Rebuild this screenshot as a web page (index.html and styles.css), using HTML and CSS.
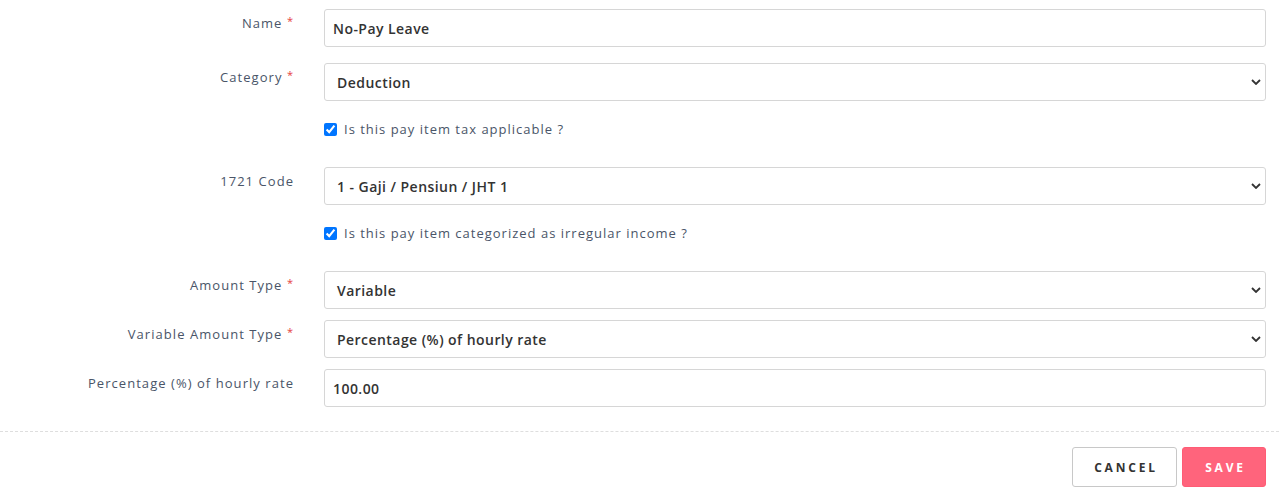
FILE: index.html
```html
<!DOCTYPE html>
<html>
<head>
<meta charset="utf-8">
<link rel="stylesheet" href="styles.css">
</head>
<body>
<form class="form">
  <div class="fields">
    <div class="row">
      <label class="label">Name <span class="req">*</span></label>
      <div class="control"><input class="input" type="text" value="No-Pay Leave"></div>
    </div>
    <div class="row">
      <label class="label">Category <span class="req">*</span></label>
      <div class="control select-wrap">
        <div class="select">Deduction</div>
        <svg class="chev" width="10" height="6" viewBox="0 0 10 6"><path d="M1 1l4 4 4-4" fill="none" stroke="#333" stroke-width="1.8"/></svg>
      </div>
    </div>
    <div class="check-row">
      <label class="check"><input type="checkbox" checked> <span>Is this pay item tax applicable ?</span></label>
    </div>
    <div class="row">
      <label class="label">1721 Code</label>
      <div class="control select-wrap">
        <div class="select">1 - Gaji / Pensiun / JHT 1</div>
        <svg class="chev" width="10" height="6" viewBox="0 0 10 6"><path d="M1 1l4 4 4-4" fill="none" stroke="#333" stroke-width="1.8"/></svg>
      </div>
    </div>
    <div class="check-row">
      <label class="check"><input type="checkbox" checked> <span>Is this pay item categorized as irregular income ?</span></label>
    </div>
    <div class="row tight">
      <label class="label">Amount Type <span class="req">*</span></label>
      <div class="control select-wrap">
        <div class="select">Variable</div>
        <svg class="chev" width="10" height="6" viewBox="0 0 10 6"><path d="M1 1l4 4 4-4" fill="none" stroke="#333" stroke-width="1.8"/></svg>
      </div>
    </div>
    <div class="row tight">
      <label class="label">Variable Amount Type <span class="req">*</span></label>
      <div class="control select-wrap">
        <div class="select">Percentage (%) of hourly rate</div>
        <svg class="chev" width="10" height="6" viewBox="0 0 10 6"><path d="M1 1l4 4 4-4" fill="none" stroke="#333" stroke-width="1.8"/></svg>
      </div>
    </div>
    <div class="row tight">
      <label class="label">Percentage (%) of hourly rate</label>
      <div class="control"><input class="input" type="text" value="100.00"></div>
    </div>
  </div>
  <div class="footer">
    <button type="button" class="btn btn-cancel">CANCEL</button>
    <button type="button" class="btn btn-save">SAVE</button>
  </div>
</form>
</body>
</html>
```
FILE: styles.css
```css
html, body {
  margin: 0;
  padding: 0;
  background: #fff;
}
body {
  font-family: "Open Sans", "Noto Sans", sans-serif;
  color: #333;
}
.form {
  display: flex;
  flex-direction: column;
}
.fields {
  padding: 9px 13px 0 0;
  display: flex;
  flex-direction: column;
}
.row {
  display: flex;
  align-items: flex-start;
  gap: 30px;
  margin-bottom: 16px;
}
.row.tight {
  margin-bottom: 11px;
}
.label {
  width: 294px;
  flex: none;
  text-align: right;
  font-size: 13px;
  line-height: 20px;
  padding-top: 4px;
  color: #4a5568;
  letter-spacing: 1.05px;
}
.req {
  color: #e53e3e;
  font-size: 11px;
  vertical-align: top;
  position: relative;
  top: -2px;
}
.control {
  flex: 1;
  position: relative;
}
.input, .select {
  box-sizing: border-box;
  width: 100%;
  height: 38px;
  border: 1px solid #d6d6d6;
  border-radius: 3px;
  background: #fff;
  font-family: "Open Sans", "Noto Sans", sans-serif;
  font-size: 14px;
  font-weight: 600;
  color: #333;
  letter-spacing: 0.45px;
  outline: none;
}
.input {
  padding: 0 8px;
  display: block;
}
.select {
  padding: 0 12px;
  display: flex;
  align-items: center;
}
.chev {
  position: absolute;
  right: 5px;
  top: 16px;
}
.check-row {
  padding-left: 324px;
  height: 34px;
  margin-top: -5px;
  margin-bottom: 21px;
  display: flex;
  align-items: center;
}
.check {
  display: flex;
  align-items: center;
  gap: 7px;
  font-size: 13px;
  color: #4a5568;
  letter-spacing: 1px;
}
.check input {
  margin: 0;
  width: 13px;
  height: 13px;
}
.footer {
  margin-top: 13px;
  border-top: 1px dashed #dedede;
  padding: 15px 13px 16px 0;
  display: flex;
  justify-content: flex-end;
  gap: 5px;
}
.btn {
  height: 40px;
  border-radius: 3px;
  font-family: "Open Sans", "Noto Sans", sans-serif;
  font-size: 12px;
  font-weight: 700;
  letter-spacing: 2.8px;
  cursor: pointer;
  padding: 0 0 0 3px;
}
.btn-cancel {
  width: 105px;
  background: #fff;
  border: 1px solid #c8c8c8;
  color: #333;
}
.btn-save {
  width: 84px;
  background: #ff647c;
  border: 1px solid #ff5c75;
  color: #fff;
}
```
